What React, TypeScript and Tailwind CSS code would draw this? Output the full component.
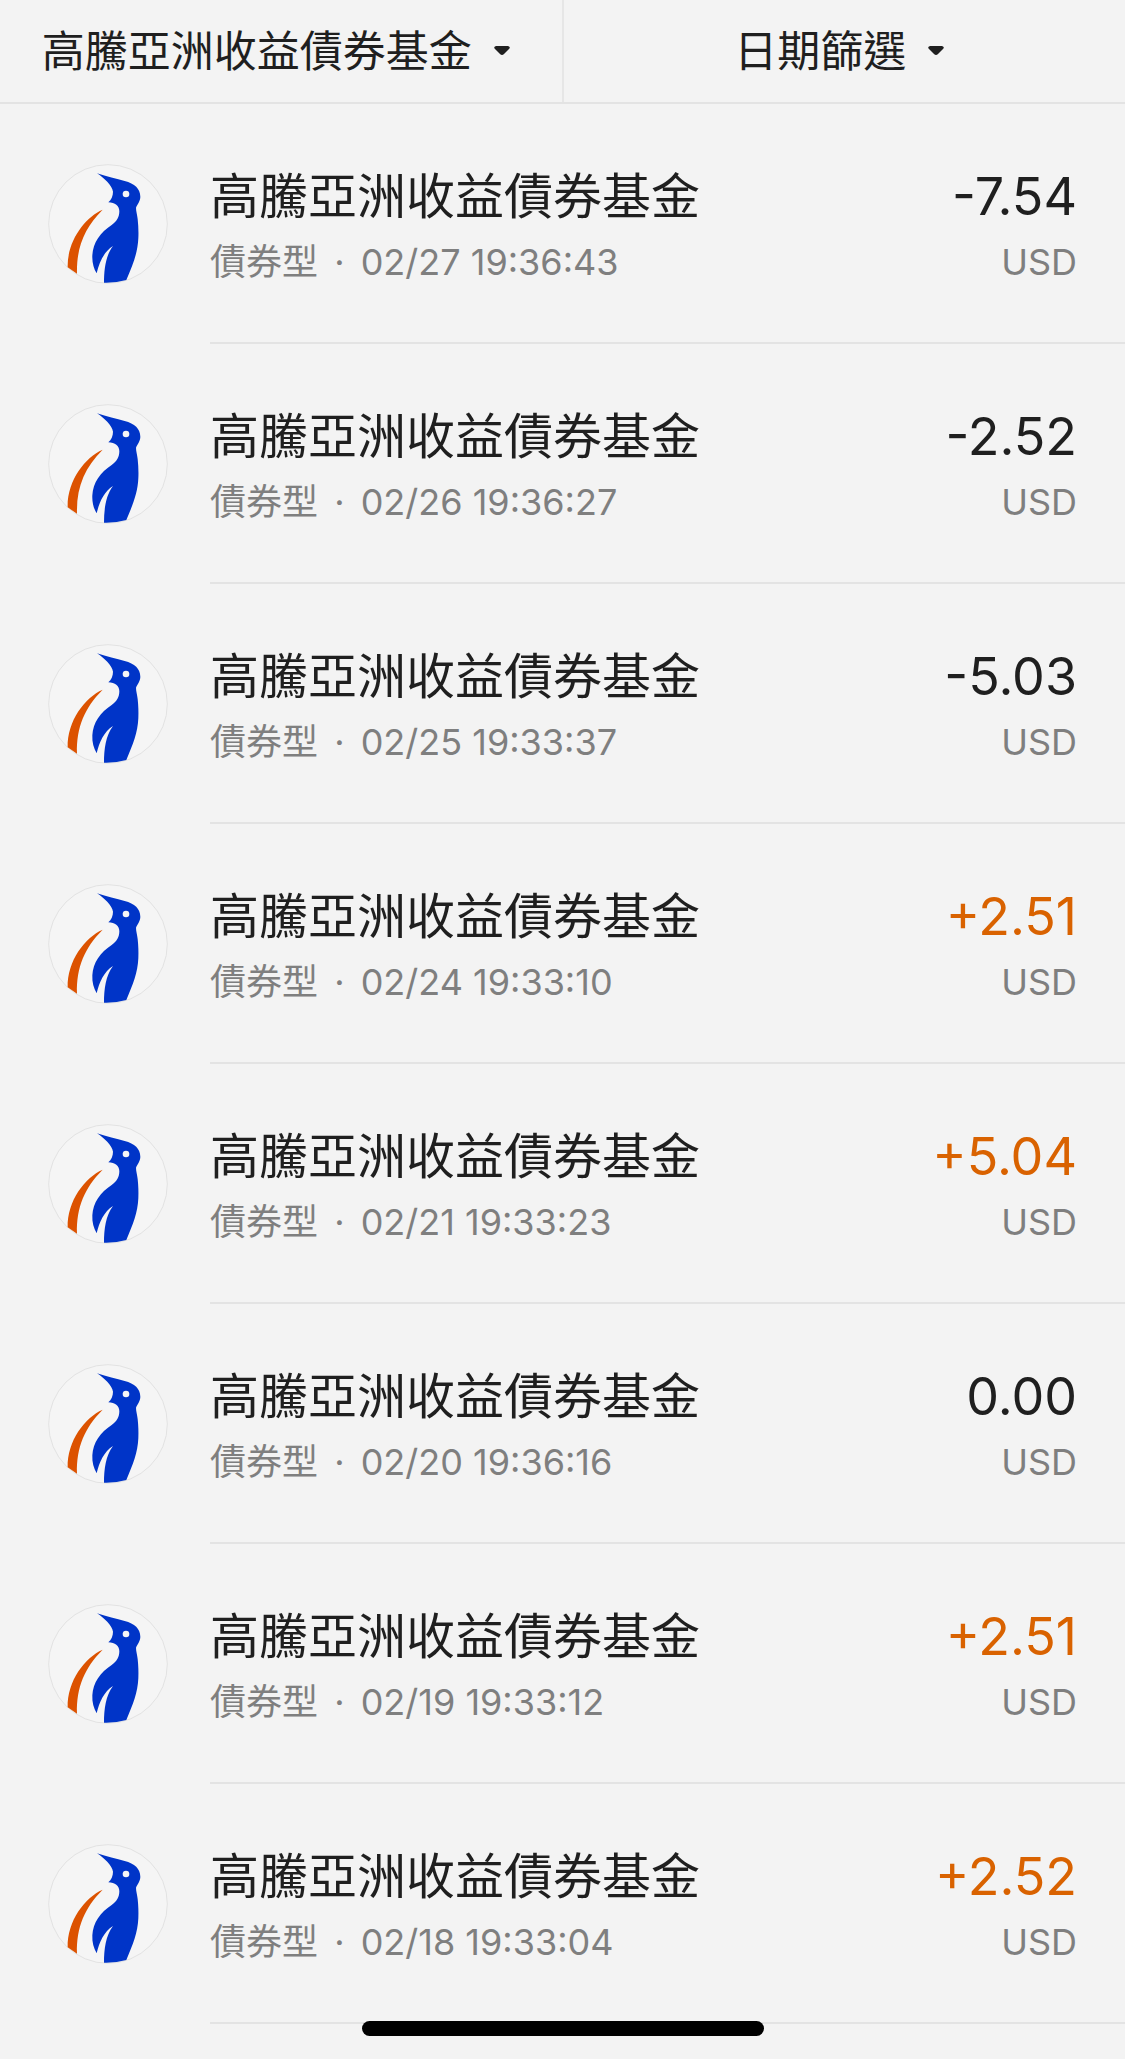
import React from "react";

type Transaction = {
  date: string;
  time: string;
  amount: string;
};

const FUND_NAME = "高騰亞洲收益債券基金";

const transactions: Transaction[] = [
  { date: "02/27", time: "19:36:43", amount: "-7.54" },
  { date: "02/26", time: "19:36:27", amount: "-2.52" },
  { date: "02/25", time: "19:33:37", amount: "-5.03" },
  { date: "02/24", time: "19:33:10", amount: "+2.51" },
  { date: "02/21", time: "19:33:23", amount: "+5.04" },
  { date: "02/20", time: "19:36:16", amount: "0.00" },
  { date: "02/19", time: "19:33:12", amount: "+2.51" },
  { date: "02/18", time: "19:33:04", amount: "+2.52" },
];

const FundLogo = () => (
  <svg viewBox="54 41 360 360" className="size-30 shrink-0" aria-hidden="true">
    <circle cx="234" cy="221" r="178" fill="#f5f5f5" stroke="#e2e2e2" strokeWidth="3" />
    <path
      d="M218 178C165 201 111 272 113 351L141 370C139 290 164 232 218 178Z"
      fill="#dc5200"
    />
    <path
      d="M201 69C230 79 260 86 284 92C314 100 331 115 331 139C331 152 323 160 318 172C318 182 322 195 323 206C325 225 326 245 325 264C323 308 309 342 289 389Q258 398 222 397C222 357 227 316 249 287C222 304 208 335 200 369C191 354 186 337 187 315C189 277 211 246 245 224C261 213 268 200 268 183C268 166 255 157 235 156C244 148 249 137 249 124C246 105 222 83 201 69Z"
      fill="#0034c8"
    />
    <circle cx="288" cy="131" r="10" fill="#f5f5f5" />
  </svg>
);

const FilterSelect = ({ label, value }: { label: string; value: string }) => (
  <label className="flex flex-1 items-center justify-center border-[#e6e6e6] pr-2.5 first:border-r-2">
    <select
      aria-label={label}
      className="appearance-none bg-transparent text-[43px] leading-[60px] outline-none"
    >
      <option>{value}</option>
    </select>
    <svg viewBox="0 0 16 10" className="ml-[22px] h-2.5 w-4 shrink-0" aria-hidden="true">
      <path d="M2 0H14Q17 1 15 3L10 8Q8 10 6 8L1 3Q-1 1 2 0Z" fill="#1f1f1f" />
    </svg>
  </label>
);

const TransactionRow = ({ date, time, amount }: Transaction) => (
  <li className="flex gap-[42px] pl-12">
    <div className="flex items-center">
      <FundLogo />
    </div>
    <div className="flex flex-1 justify-between border-b-2 border-[#e3e3e3] pt-15 pr-12 pb-[58px]">
      <div>
        <h2 className="text-[49px] leading-[66px]">{FUND_NAME}</h2>
        <p className="mt-2.5 text-[36px] leading-[44px] text-[#7f7f7f]">
          債券型 <span className="mx-1.5">·</span> {date} {time}
        </p>
      </div>
      <div className="text-right">
        <p
          className={
            amount.startsWith("+")
              ? "text-[52px] leading-[66px] text-[#d96200]"
              : "text-[52px] leading-[66px]"
          }
        >
          {amount}
        </p>
        <p className="mt-2.5 text-[36px] leading-[44px] text-[#7f7f7f]">USD</p>
      </div>
    </div>
  </li>
);

const App = () => {
  return (
    <main className="min-h-screen bg-[#f3f3f3] font-['Inter','Noto_Sans_CJK_TC',sans-serif] text-[#1f1f1f]">
      {/* Filters */}
      <header className="flex h-26 border-b-2 border-[#e3e3e3]">
        <FilterSelect label="基金" value={FUND_NAME} />
        <FilterSelect label="日期" value="日期篩選" />
      </header>

      <ul>
        {transactions.map((item) => (
          <TransactionRow key={item.date} {...item} />
        ))}
      </ul>

      {/* Home indicator */}
      <div className="fixed bottom-[23px] left-1/2 h-[15px] w-[402px] -translate-x-1/2 rounded-full bg-black" />
    </main>
  );
};

export default App;
